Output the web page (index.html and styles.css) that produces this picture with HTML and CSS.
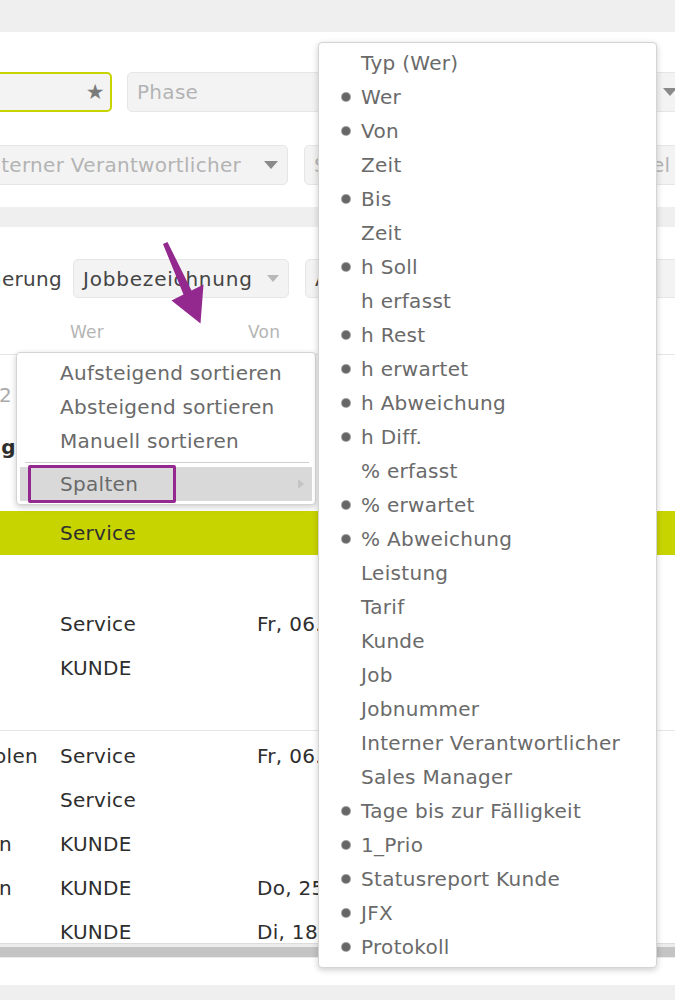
FILE: index.html
```html
<!DOCTYPE html>
<html lang="de">
<head>
  <meta charset="UTF-8" />
  <meta name="viewport" content="width=device-width, initial-scale=1.0"/>
  <title>Jobs - Aufgaben</title>
  <link rel="stylesheet" href="styles.css">
</head>
<body>
  <div class="page">
    <!-- Filterbereich -->
    <section class="panel filters">
      <div class="filter-row">
        <div class="field field-job active"><span class="star">★</span></div>
        <div class="field field-phase"><span class="placeholder">Phase</span><span class="caret"></span></div>
      </div>
      <div class="filter-row">
        <div class="field field-owner"><span class="placeholder">Interner Verantwortlicher</span><span class="caret"></span></div>
        <div class="field field-sales"><span class="placeholder">Sales Manager</span><span class="caret"></span></div>
        <div class="field field-title"><span class="placeholder">Titel</span></div>
      </div>
    </section>

    <!-- Liste -->
    <section class="panel list">
      <div class="toolbar">
        <span class="toolbar-label">Sortierung</span>
        <div class="field select-sort"><span class="value">Jobbezeichnung</span><span class="caret light"></span></div>
        <div class="field select-dir"><span class="value">Aufsteigend</span><span class="caret light"></span></div>
      </div>

      <div class="table">
        <div class="thead">
          <span></span>
          <span>Wer</span>
          <span>Von</span>
        </div>
        <div class="tbody">
          <div class="group">
            <div class="row"><span class="name muted tail-10">12.09.2022</span></div>
            <div class="row row-name"><span class="name strong tail-15">Relaunch Planung</span></div>
          </div>
          <div class="row row-active"><span class="name"></span><span>Service</span></div>
          <div class="block">
            <div class="row"><span class="name"></span><span>Service</span><span class="date">Fr, 06.10.2023</span></div>
            <div class="row"><span class="name"></span><span>KUNDE</span></div>
          </div>
          <div class="block block-open">
            <div class="row"><span class="name tail-38">Daten abholen</span><span>Service</span><span class="date">Fr, 06.10.2023</span></div>
            <div class="row"><span class="name"></span><span>Service</span></div>
            <div class="row"><span class="name tail-10">Freigabe einholen</span><span>KUNDE</span></div>
            <div class="row"><span class="name tail-10">Korrektur einholen</span><span>KUNDE</span><span class="date">Do, 25.05.2023</span></div>
            <div class="row"><span class="name"></span><span>KUNDE</span><span class="date">Di, 18.04.2023</span></div>
          </div>
        </div>
        <div class="hscroll"><div class="hscroll-thumb"></div></div>
      </div>
    </section>
  </div>

  <!-- Kontextmenü der Spalte -->
  <div class="menu col-menu">
    <div class="menu-item">Aufsteigend sortieren</div>
    <div class="menu-item">Absteigend sortieren</div>
    <div class="menu-item">Manuell sortieren</div>
    <div class="menu-sep"></div>
    <div class="menu-item has-sub hover">Spalten</div>
  </div>

  <div class="menu sub-menu">
    <div class="menu-item">Typ (Wer)</div>
    <div class="menu-item on">Wer</div>
    <div class="menu-item on">Von</div>
    <div class="menu-item">Zeit</div>
    <div class="menu-item on">Bis</div>
    <div class="menu-item">Zeit</div>
    <div class="menu-item on">h Soll</div>
    <div class="menu-item">h erfasst</div>
    <div class="menu-item on">h Rest</div>
    <div class="menu-item on">h erwartet</div>
    <div class="menu-item on">h Abweichung</div>
    <div class="menu-item on">h Diff.</div>
    <div class="menu-item">% erfasst</div>
    <div class="menu-item on">% erwartet</div>
    <div class="menu-item on">% Abweichung</div>
    <div class="menu-item">Leistung</div>
    <div class="menu-item">Tarif</div>
    <div class="menu-item">Kunde</div>
    <div class="menu-item">Job</div>
    <div class="menu-item">Jobnummer</div>
    <div class="menu-item">Interner Verantwortlicher</div>
    <div class="menu-item">Sales Manager</div>
    <div class="menu-item on">Tage bis zur Fälligkeit</div>
    <div class="menu-item on">1_Prio</div>
    <div class="menu-item on">Statusreport Kunde</div>
    <div class="menu-item on">JFX</div>
    <div class="menu-item on">Protokoll</div>
  </div>

  <!-- Markierungen aus dem Screenshot -->
  <div class="mark-box"></div>
  <svg class="mark-arrow" width="70" height="100" viewBox="0 0 70 100">
    <polygon points="13,9 17.5,7 41.5,55.5 53.5,49.5 50.5,88.5 21.5,65.5 33.5,59.5" fill="#93288f"/>
  </svg>
</body>
</html>
```

FILE: styles.css
```css
html, body {
  overflow: hidden;
}
body {
  margin: 0;
  font-family: "DejaVu Sans", "Liberation Sans", sans-serif;
  letter-spacing: 0.3px;
  background: #efefef;
  color: #333;
  width: 675px;
  height: 1000px;
  position: relative;
}
.page {
  padding-top: 32px;
}
.panel {
  background: #fff;
}

/* Filter */
.filters {
  padding: 40px 0 22px;
  margin-bottom: 20px;
}
.filter-row {
  display: flex;
  gap: 15px;
  margin-left: -28px;
  width: 1000px;
}
.filter-row + .filter-row {
  margin-top: 33px;
  gap: 16px;
}
.field {
  height: 40px;
  box-sizing: border-box;
  background: #f3f3f3;
  border: 1px solid #e6e6e6;
  border-radius: 5px;
  display: flex;
  align-items: center;
  padding: 0 9px;
  font-size: 20px;
  flex-shrink: 0;
}
.field.active {
  border: 2px solid #c8d400;
  justify-content: flex-end;
  padding-right: 5px;
}
.field-job { width: 140px; }
.field-phase { width: 560px; }
.field-owner { width: 316px; }
.field-sales { width: 296px; }
.field-title { width: 200px; }
.placeholder {
  color: #b3b3b3;
  flex: 1;
  white-space: nowrap;
}
.value {
  color: #444;
  flex: 1;
  white-space: nowrap;
  letter-spacing: 0.8px;
}
.star {
  color: #7a7a7a;
  font-size: 21px;
}
.caret {
  width: 0;
  height: 0;
  border-left: 7px solid transparent;
  border-right: 7px solid transparent;
  border-top: 8px solid #8a8a8a;
  margin-left: 8px;
}
.caret.light {
  border-top-color: #b8b8b8;
  border-left-width: 6px;
  border-right-width: 6px;
  border-top-width: 7px;
}

/* Liste */
.list {
  padding: 32px 0 27px;
}
.toolbar {
  display: flex;
  align-items: center;
  width: 1000px;
}
.toolbar-label {
  width: 62px;
  display: flex;
  justify-content: flex-end;
  white-space: nowrap;
  font-size: 20px;
  color: #444;
  margin-right: 11px;
}
.toolbar .field {
  height: 39px;
}
.select-sort { width: 216px; }
.select-dir { width: 400px; margin-left: 16px; }

.thead {
  display: grid;
  grid-template-columns: 70px 178px 1fr;
  height: 44px;
  margin-top: 12px;
  align-items: center;
  color: #b5b5b5;
  font-size: 17px;
  border-bottom: 1px solid #e6e6e6;
}
.tbody {
  height: 588px;
  overflow: hidden;
}
.row {
  display: grid;
  grid-template-columns: 60px 197px 1fr;
  height: 44px;
  align-items: center;
  font-size: 20px;
  color: #2e2e2e;
  white-space: nowrap;
}
.name {
  display: flex;
  justify-content: flex-end;
  white-space: nowrap;
}
.tail-10 { padding-right: 48px; }
.tail-15 { padding-right: 44px; }
.tail-38 { padding-right: 22px; }
.muted { color: #aaa; }
.strong { font-weight: bold; }
.group {
  height: 156px;
  padding-top: 18px;
  box-sizing: border-box;
}
.row-name {
  margin-top: 8px;
}
.row-active {
  background: #c8d400;
  color: #2f2f2f;
}
.block {
  padding: 47px 0 40px;
  border-bottom: 1px solid #e6e6e6;
}
.block-open {
  padding: 3px 0 0;
  border-bottom: none;
}
.hscroll {
  height: 15px;
  box-sizing: border-box;
  background: #ececec;
  border-top: 1px solid #dcdcdc;
  padding-top: 3px;
}
.hscroll-thumb {
  height: 10px;
  background: #c4c4c4;
}

/* Menüs */
.menu {
  position: absolute;
  background: #fff;
  border: 1px solid #d4d4d4;
  border-radius: 4px;
  box-shadow: 0 2px 6px rgba(0, 0, 0, 0.2);
  padding: 3px 0;
  box-sizing: border-box;
  color: #6a6a6a;
  font-size: 20px;
}
.col-menu {
  left: 16px;
  top: 352px;
  width: 300px;
}
.sub-menu {
  left: 318px;
  top: 42px;
  width: 339px;
}
.menu-item {
  height: 34px;
  display: flex;
  align-items: center;
  padding-left: 42px;
  position: relative;
  white-space: nowrap;
}
.col-menu .menu-item {
  padding-left: 43px;
}
.menu-sep {
  height: 1px;
  background: #cfcfcf;
  margin: 4px 6px 4px 8px;
}
.col-menu .menu-item.hover {
  background: #d9d9d9;
  margin: 0 3px;
  padding-left: 40px;
}
.menu-item.has-sub::after {
  content: "";
  position: absolute;
  right: 8px;
  top: 12px;
  border-top: 5px solid transparent;
  border-bottom: 5px solid transparent;
  border-left: 6px solid #c4c4c4;
}
.menu-item.on::before {
  content: "";
  position: absolute;
  left: 23px;
  top: 13px;
  width: 8px;
  height: 8px;
  border-radius: 50%;
  background: #666;
  box-shadow: 0 0 0 1px #a0a0a0;
}

/* Markierungen */
.mark-box {
  position: absolute;
  left: 28px;
  top: 465px;
  width: 148px;
  height: 38px;
  box-sizing: border-box;
  border: 3px solid #93288f;
  border-radius: 2px;
}
.mark-arrow {
  position: absolute;
  left: 150px;
  top: 235px;
}
```
